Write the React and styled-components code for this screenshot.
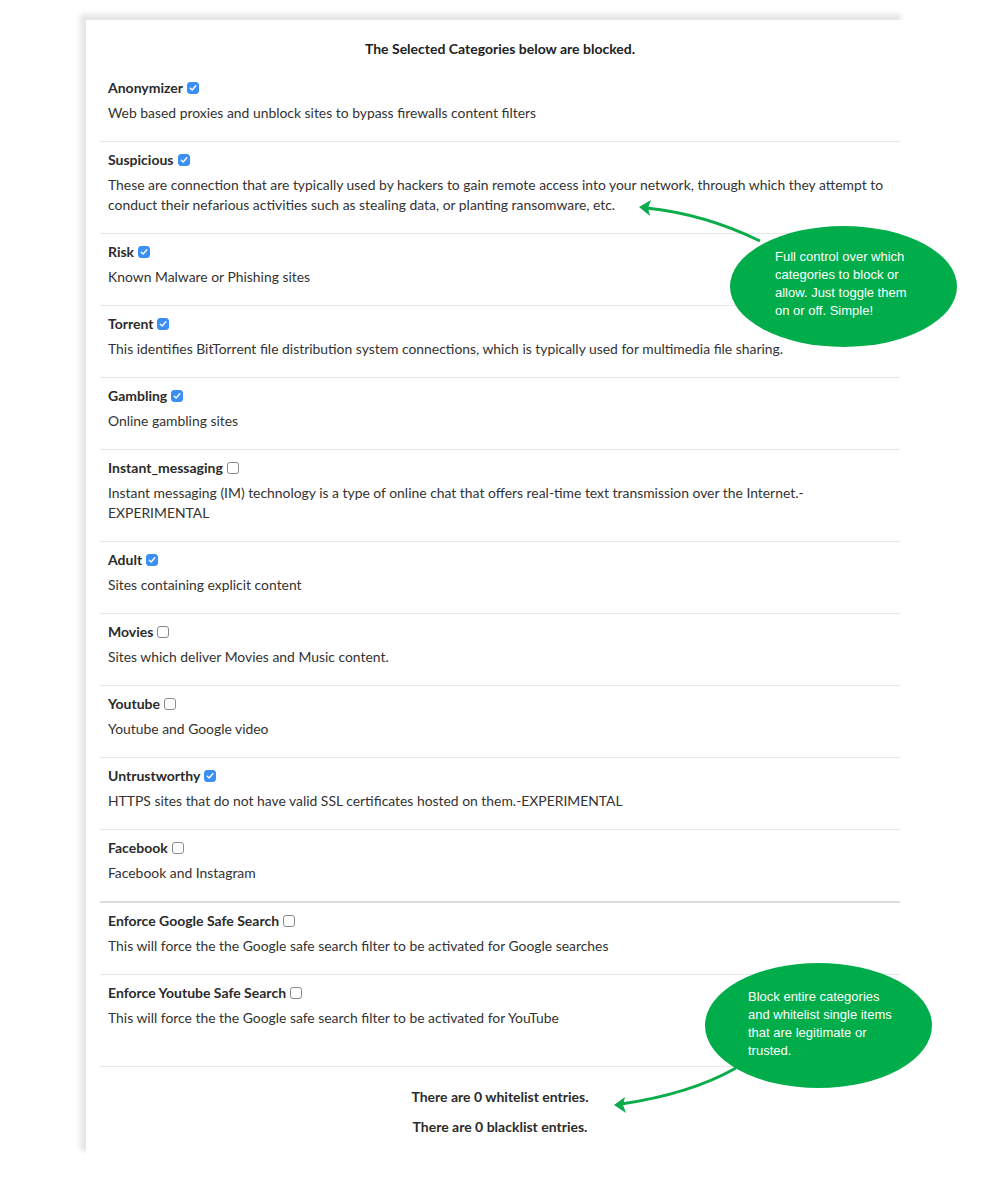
import React from 'react'
import styled, { createGlobalStyle } from 'styled-components'

const GlobalStyle = createGlobalStyle`
    body{
        margin: 0;
        background: #fff;
        font-family: Lato, "Open Sans", sans-serif;
        color: #333;
    }
`

const categories = [
    { name: 'Anonymizer', on: true, desc: 'Web based proxies and unblock sites to bypass firewalls content filters' },
    { name: 'Suspicious', on: true, desc: 'These are connection that are typically used by hackers to gain remote access into your network, through which they attempt to conduct their nefarious activities such as stealing data, or planting ransomware, etc.' },
    { name: 'Risk', on: true, desc: 'Known Malware or Phishing sites' },
    { name: 'Torrent', on: true, desc: 'This identifies BitTorrent file distribution system connections, which is typically used for multimedia file sharing.' },
    { name: 'Gambling', on: true, desc: 'Online gambling sites' },
    { name: 'Instant_messaging', on: false, desc: 'Instant messaging (IM) technology is a type of online chat that offers real-time text transmission over the Internet.- EXPERIMENTAL' },
    { name: 'Adult', on: true, desc: 'Sites containing explicit content' },
    { name: 'Movies', on: false, desc: 'Sites which deliver Movies and Music content.' },
    { name: 'Youtube', on: false, desc: 'Youtube and Google video' },
    { name: 'Untrustworthy', on: true, desc: 'HTTPS sites that do not have valid SSL certificates hosted on them.-EXPERIMENTAL' },
    { name: 'Facebook', on: false, desc: 'Facebook and Instagram', thick: true },
    { name: 'Enforce Google Safe Search', on: false, desc: 'This will force the the Google safe search filter to be activated for Google searches' },
    { name: 'Enforce Youtube Safe Search', on: false, desc: 'This will force the the Google safe search filter to be activated for YouTube', last: true },
]

function Check({ on }) {
    return (
        <Box $on={on}>
            {on && (
                <svg width="8" height="8" viewBox="0 0 8 8">
                    <path d="M1.3 4.2 L3.2 6 L6.8 1.8" fill="none" stroke="#fff" strokeWidth="1.4" strokeLinecap="round" strokeLinejoin="round" />
                </svg>
            )}
        </Box>
    )
}

function App() {
    return (
        <Page>
            <GlobalStyle />
            <Card>
                <Heading>The Selected Categories below are blocked.</Heading>
                {categories.map(c => (
                    <Row key={c.name} $thick={c.thick} $last={c.last}>
                        <Title>{c.name}<Check on={c.on} /></Title>
                        <Desc>{c.desc}</Desc>
                    </Row>
                ))}
                <Summary>
                    <p>There are 0 whitelist entries.</p>
                    <p>There are 0 blacklist entries.</p>
                </Summary>
            </Card>

            <Arrows width="1000" height="1196" viewBox="0 0 1000 1196">
                <path d="M760 241 Q705 214 646 208" fill="none" stroke="#0aad4a" strokeWidth="3" />
                <path d="M639 207 L651 200 L648 208 L650 216 Z" fill="#0aad4a" />
                <path d="M736 1068 Q690 1094 621 1104" fill="none" stroke="#0aad4a" strokeWidth="3" />
                <path d="M614 1105 L625 1097 L623 1105 L626 1113 Z" fill="#0aad4a" />
            </Arrows>

            <Callout $left={730} $top={226} $h={121} $pt={22} $pl={45}>
                Full control over which categories to block or allow. Just toggle them on or off. Simple!
            </Callout>
            <Callout $left={705} $top={963} $h={125} $pt={25} $pl={43}>
                Block entire categories and whitelist single items that are legitimate or trusted.
            </Callout>
        </Page>
    )
}

const Page = styled.div`
    position: relative;
    min-height: 1196px;
    padding: 20px 0 0 86px;
    box-sizing: border-box;
`

const Card = styled.div`
    width: 821px;
    background: #fff;
    box-shadow: -6px -6px 5px rgba(0, 0, 0, 0.1);
    padding: 19px 7px 20px 14px;
    box-sizing: border-box;
`

const Heading = styled.h2`
    margin: 0 0 11px;
    text-align: center;
    font-size: 14px;
    line-height: 20px;
    font-weight: 700;
    color: #222;
`

const Row = styled.div`
    padding: 8px 8px ${p => p.$last ? '38px' : '18px'};
    border-bottom: ${p => p.$thick ? '2px solid #dcdcdc' : '1px solid #e6e6e6'};
`

const Title = styled.div`
    display: flex;
    align-items: center;
    font-size: 14px;
    line-height: 20px;
    font-weight: 700;
    color: #2b2b2b;
`

const Box = styled.span`
    display: inline-flex;
    align-items: center;
    justify-content: center;
    width: 12px;
    height: 12px;
    margin-left: 4px;
    box-sizing: border-box;
    border-radius: 3px;
    background: ${p => p.$on ? '#3b8ff5' : '#fff'};
    border: 1px solid ${p => p.$on ? '#3b8ff5' : '#8a8a8a'};
`

const Desc = styled.p`
    margin: 5px 0 0;
    font-size: 13.9px;
    line-height: 20px;
    color: #333;
`

const Summary = styled.div`
    padding-top: 20px;
    text-align: center;
    p{
        margin: 0 0 10px;
        font-size: 14px;
        line-height: 20px;
        font-weight: 700;
        color: #2b2b2b;
    }
    p:last-child{
        margin-bottom: 0;
    }
`

const Arrows = styled.svg`
    position: absolute;
    left: 0;
    top: 0;
    pointer-events: none;
`

const Callout = styled.div`
    position: absolute;
    left: ${p => p.$left}px;
    top: ${p => p.$top}px;
    width: 227px;
    height: ${p => p.$h}px;
    border-radius: 50%;
    background: #00ad4a;
    box-sizing: border-box;
    padding: ${p => p.$pt}px 40px 0 ${p => p.$pl}px;
    font-family: "Liberation Sans", Arial, sans-serif;
    font-size: 13px;
    line-height: 18px;
    color: #fff;
`

export default App
